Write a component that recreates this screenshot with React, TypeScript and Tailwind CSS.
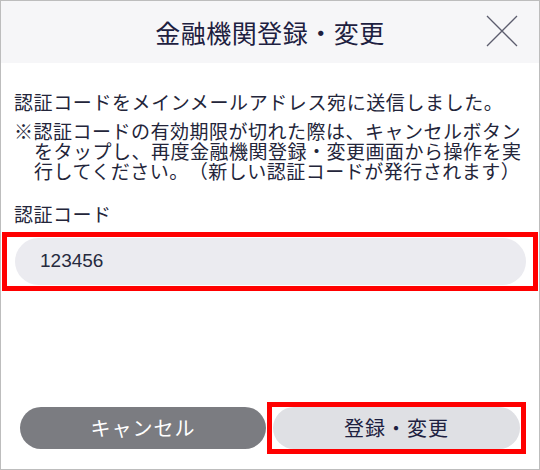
import React from "react";

const jp = { fontFamily: '"Noto Sans CJK JP", "Noto Sans", sans-serif' };

export default function App() {
  return (
    <div className="w-[540px] h-[470px] border border-[#bdbdbd] bg-white flex flex-col text-[#23253a] [text-spacing-trim:space-all]" style={jp}>
      {/* Header */}
      <header className="relative h-[62px] bg-[#f6f6f8] flex items-center justify-center shrink-0">
        <h1 className="text-[25px] leading-none text-[#1d2040] tracking-[0.5px]">金融機関登録・変更</h1>
        <button className="absolute right-[21px] top-[14px] w-[32px] h-[32px]" aria-label="閉じる">
          <svg viewBox="0 0 32 32" className="w-[32px] h-[32px]">
            <path d="M1 1 L31 31 M31 1 L1 31" stroke="#5c5d6e" strokeWidth="1.3" fill="none" />
          </svg>
        </button>
      </header>

      {/* Body */}
      <div className="flex flex-col">
        <p className="mt-[29px] pl-[13px] text-[19px] leading-[20px] tracking-[0.6px] whitespace-nowrap">
          認証コードをメインメールアドレス宛に送信しました。
        </p>
        <p className="mt-[9px] pl-[33px] -indent-[20px] text-[19px] leading-[20px] tracking-[0.5px] whitespace-nowrap">
          ※認証コードの有効期限が切れた際は、キャンセルボタン
          <br />
          をタップし、再度金融機関登録・変更画面から操作を実
          <br />
          行してください。（新しい認証コードが発行されます）
        </p>

        <label className="mt-[23px] pl-[13px] text-[19px] leading-[20px] tracking-[0.5px]">認証コード</label>

        <div className="mt-[8px] ml-[1px] w-[536px] h-[59px] border-[5px] border-[#ff0000] pl-[8px] pr-[7px] pt-[1px]">
          <div className="h-[47px] rounded-full bg-[#ebebf0] flex items-center pl-[25px]">
            <span className="text-[19px] text-[#262a3e]" style={{ fontFamily: '"Liberation Sans", Arial, sans-serif' }}>
              123456
            </span>
          </div>
        </div>

        {/* Buttons */}
        <div className="mt-[111px] pl-[19px] flex items-center">
          <button className="w-[246px] h-[42px] rounded-full bg-[#7b7c81] text-white text-[20px] tracking-[1px]">
            キャンセル
          </button>
          <div className="ml-[1px] w-[259px] h-[52px] border-[5px] border-[#ff0000] px-[1px]">
            <button className="w-full h-[42px] rounded-full bg-[#dfe0e4] text-[#1d2040] text-[20px] tracking-[1px]">
              登録・変更
            </button>
          </div>
        </div>
      </div>
    </div>
  );
}
